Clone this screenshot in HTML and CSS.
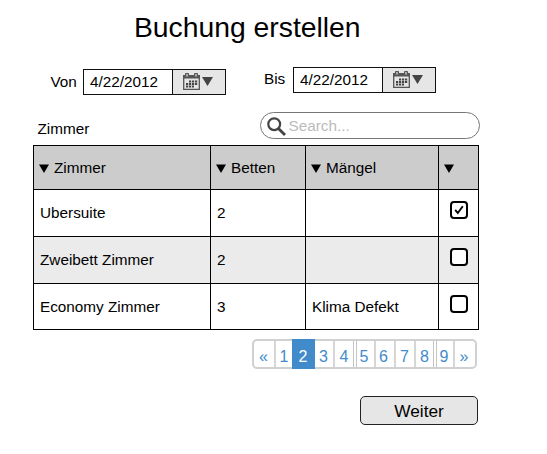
FILE: index.html
```html
<!DOCTYPE html>
<html lang="de">
<head>
<meta charset="utf-8">
<title>Buchung erstellen</title>
<link rel="stylesheet" href="styles.css">
</head>
<body>
<svg width="0" height="0" class="defs">
  <symbol id="calendar" viewBox="0 0 17 18">
    <path d="M0.7 3.500V17.300H16.300V3.500" fill="none" stroke="#555" stroke-width="1.300"/>
    <path d="M0 3H17V6.500H0Z" fill="#555"/>
    <path d="M2.500 4.500V1.500H5.500V4.500M11.500 4.500V1.500H14.500V4.500" fill="#aaa" stroke="#555"/>
    <path d="M6 9.500H15M3 12H15M3 14.500H11" fill="none" stroke="#444" stroke-width="1.900" stroke-dasharray="2.200 .8"/>
  </symbol>
</svg>
<main class="page">
  <h1 class="title">Buchung erstellen</h1>
  <div class="dates">
    <label class="date-label from-label">Von</label>
    <div class="date from">
      <span class="value">4/22/2012</span>
      <span class="picker"><svg width="17" height="18"><use href="#calendar"/></svg><svg class="arrow" width="11" height="9"><path d="M0 0H11L5.500 9Z" fill="#444"/></svg></span>
    </div>
    <label class="date-label to-label">Bis</label>
    <div class="date">
      <span class="value">4/22/2012</span>
      <span class="picker"><svg width="17" height="18"><use href="#calendar"/></svg><svg class="arrow" width="11" height="9"><path d="M0 0H11L5.500 9Z" fill="#444"/></svg></span>
    </div>
  </div>
  <div class="toolbar">
    <span class="caption">Zimmer</span>
    <div class="search">
      <svg width="19" height="19" fill="none" stroke="#444"><circle cx="7.200" cy="7.200" r="5.900" stroke-width="2.200"/><path d="M11.400 11.400L18 18" stroke-width="2.800"/></svg>
      <span>Search...</span>
    </div>
  </div>
  <div class="table">
    <div class="cell head"><svg width="10" height="9"><path d="M0 .5H10L5 9Z"/></svg>Zimmer</div>
    <div class="cell head"><svg width="10" height="9"><path d="M0 .5H10L5 9Z"/></svg>Betten</div>
    <div class="cell head"><svg width="10" height="9"><path d="M0 .5H10L5 9Z"/></svg>Mängel</div>
    <div class="cell head"><svg width="10" height="9"><path d="M0 .5H10L5 9Z"/></svg></div>

    <div class="cell">Ubersuite</div>
    <div class="cell">2</div>
    <div class="cell"></div>
    <div class="cell check"><span class="box"><svg width="10" height="10"><path d="M1.200 4.800L3.800 8L8.800 1.200" fill="none" stroke="#000" stroke-width="1.900"/></svg></span></div>

    <div class="cell alt">Zweibett Zimmer</div>
    <div class="cell alt">2</div>
    <div class="cell alt"></div>
    <div class="cell alt check"><span class="box"></span></div>

    <div class="cell">Economy Zimmer</div>
    <div class="cell">3</div>
    <div class="cell">Klima Defekt</div>
    <div class="cell check"><span class="box"></span></div>
  </div>
  <nav class="pages">
    <span class="edge">«</span><span class="one">1</span><span class="active">2</span><span>3</span><span class="split">4</span><span class="five">5</span><span class="six">6</span><span>7</span><span class="split eight">8</span><span class="nine">9</span><span class="last">»</span>
  </nav>
  <button class="next">Weiter</button>
</main>
</body>
</html>
```

FILE: styles.css
```css
* { box-sizing: border-box; }
body {
  margin: 0;
  background: #fff;
  color: #000;
  font: 15.3px/18px "Liberation Sans", Arial, sans-serif;
}
svg { display: block; flex: none; }
.defs { position: absolute; }
.page {
  width: 547px;
  height: 454px;
  padding: 11px 67px 0 33px;
  display: flex;
  flex-direction: column;
}
.title {
  margin: 0 0 0 101px;
  font-size: 28.3px;
  line-height: 32px;
  font-weight: 400;
  white-space: nowrap;
}
.dates {
  display: flex;
  align-items: flex-start;
  margin-top: 23px;
  padding-left: 17.500px;
  height: 29px;
}
.date-label { flex: none; }
.from-label { width: 32.500px; padding-top: 7px; }
.to-label { width: 29px; padding-top: 4px; margin-left: 38px; }
.date {
  flex: none;
  display: flex;
  width: 143px;
  height: 26px;
  border: 1px solid #111;
}
.from { margin-top: 3px; }
.from .value { padding-top: 3px; }
.from .picker { padding-top: 2px; }
.date:last-child { margin-top: 1px; }
.date:last-child .value { padding-top: 3px; }
.date:last-child .picker { padding-top: 2px; }
.value {
  width: 88px;
  padding: 4px 0 0 6px;
}
.picker {
  display: flex;
  flex: 1;
  padding: 3px 0 0 10px;
  gap: 2px;
  background: #e6e6e6;
  border-left: 1px solid #111;
}
.arrow { margin-top: 5px; }
.toolbar {
  display: flex;
  justify-content: space-between;
  width: 446.500px;
  margin-top: 17px;
  padding-left: 4.500px;
  height: 33px;
}
.caption { padding-top: 8px; }
.search {
  display: flex;
  width: 220px;
  height: 27px;
  padding: 4px 0 0 6px;
  gap: 3px;
  border: 1px solid #777;
  border-radius: 14px;
  color: #bbb;
}
.table {
  display: grid;
  grid-template-columns: 177px 95px 133px 40px;
  grid-template-rows: 44px 47px 47px 46px;
  width: 446px;
  border: solid #000;
  border-width: 1px 0 0 1px;
}
.cell {
  display: flex;
  align-items: center;
  padding-left: 6px;
  border: solid #000;
  border-width: 0 1px 1px 0;
}
.head {
  padding-left: 5px;
  gap: 5px;
  background: #ccc;
}
.head svg { margin-top: 2px; }
.alt { background: #ebebeb; }
.check {
  align-items: flex-start;
  padding: 11px 0 0 11px;
}
.box {
  display: flex;
  align-items: center;
  justify-content: center;
  width: 18px;
  height: 18px;
  border: 2px solid #000;
  border-radius: 4px;
  background: #fff;
}
.pages {
  display: flex;
  width: 225px;
  height: 30px;
  margin: 9px 0 0 219px;
  border: 2px solid #d0d0d0;
  border-radius: 5px;
  color: #428bca;
  font-size: 16px;
  line-height: 32px;
  text-align: center;
}
.pages span {
  flex: none;
  width: 20px;
  padding-right: 1px;
  border-right: 2px solid #d6d6d6;
}
.pages .edge { width: 22px; }
.pages .one { width: 16px; border: 0; padding-left: 1px; }
.pages .active {
  width: 23px;
  height: 30px;
  margin-top: -2px;
  padding-top: 2px;
  border: 0;
  background: #428bca;
  color: #fff;
}
.pages .split { width: 22px; padding: 0; border-right: 4px double #c4c4c4; }
.pages .five { width: 19px; padding-right: 3px; }
.pages .six { padding-right: 3px; }
.pages .eight { width: 21px; }
.pages .nine { width: 18px; padding-right: 2px; }
.pages .last { flex: 1; border: 0; padding-right: 2px; }
.next {
  width: 118px;
  height: 29px;
  margin: 27px 0 0 327px;
  padding: 1px 0 0;
  border: 1px solid #222;
  border-radius: 5px;
  background: #e6e6e6;
  color: #000;
  font: 17.3px/25px "Liberation Sans", Arial, sans-serif;
}
```
